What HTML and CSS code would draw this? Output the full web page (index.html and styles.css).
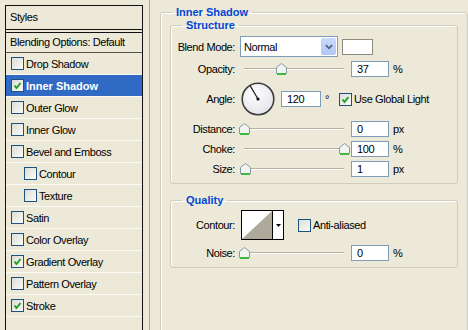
FILE: index.html
```html
<!DOCTYPE html>
<html lang="en">
<head>
  <meta charset="UTF-8" />
  <title>Layer Style - Inner Shadow</title>
  <link rel="stylesheet" href="styles.css">
</head>

<body>
  <div class="styles-panel">
    <div class="panel-title">Styles</div>
    <div class="blending">Blending Options: Default</div>
    <ul class="style-list">
      <li class="style-item"><span class="check"></span>Drop Shadow</li>
      <li class="style-item selected"><span class="check"><svg viewBox="0 0 11 11"><path d="M2.5 5.5 L4.5 8 L8.5 3" /></svg></span>Inner Shadow</li>
      <li class="style-item"><span class="check"></span>Outer Glow</li>
      <li class="style-item"><span class="check"></span>Inner Glow</li>
      <li class="style-item"><span class="check"></span>Bevel and Emboss</li>
      <li class="style-item sub"><span class="check"></span>Contour</li>
      <li class="style-item sub"><span class="check"></span>Texture</li>
      <li class="style-item"><span class="check"></span>Satin</li>
      <li class="style-item"><span class="check"></span>Color Overlay</li>
      <li class="style-item"><span class="check"><svg viewBox="0 0 11 11"><path d="M2.5 5.5 L4.5 8 L8.5 3" /></svg></span>Gradient Overlay</li>
      <li class="style-item"><span class="check"></span>Pattern Overlay</li>
      <li class="style-item"><span class="check"><svg viewBox="0 0 11 11"><path d="M2.5 5.5 L4.5 8 L8.5 3" /></svg></span>Stroke</li>
    </ul>
  </div>

  <div class="options">
    <fieldset class="group outer">
      <legend>Inner Shadow</legend>

      <fieldset class="group structure">
        <legend>Structure</legend>
        <div class="field-grid">
          <label>Blend Mode:</label>
          <div class="ctrl">
            <div class="select">
              <span class="select-value">Normal</span>
              <span class="select-btn"><svg viewBox="0 0 9 6"><path d="M1 1 L4.5 4.5 L8 1" /></svg></span>
            </div>
            <span class="swatch"></span>
          </div>

          <label>Opacity:</label>
          <div class="ctrl">
            <div class="slider"><div class="track"><span class="thumb" style="left: 37%"><svg viewBox="0 0 11 12"><path d="M0.5 10.5 V4.5 L5.5 0.5 L10.5 4.5 V10.5 Z" /><line x1="1" y1="11" x2="10" y2="11" /></svg></span></div></div>
            <span class="num">37</span>
            <span class="unit">%</span>
          </div>

          <label>Angle:</label>
          <div class="ctrl">
            <svg class="dial" viewBox="0 0 34 34">
              <defs>
                <radialGradient id="dialFill" cx="0.4" cy="0.35" r="0.7">
                  <stop offset="0" stop-color="#ffffff" />
                  <stop offset="1" stop-color="#e2e2ea" />
                </radialGradient>
              </defs>
              <circle cx="17" cy="17" r="15.8" fill="url(#dialFill)" stroke="#3d3d3d" stroke-width="1.6" />
              <line x1="17" y1="17" x2="9" y2="3.5" stroke="#111" stroke-width="1.2" />
              <circle cx="17" cy="17" r="1.6" fill="#111" />
            </svg>
            <span class="num angle">120</span>
            <span class="unit">&deg;</span>
            <span class="check global"><svg viewBox="0 0 11 11"><path d="M2.5 5.5 L4.5 8 L8.5 3" /></svg></span>
            <span class="check-label">Use Global Light</span>
          </div>

          <label>Distance:</label>
          <div class="ctrl">
            <div class="slider"><div class="track"><span class="thumb" style="left: 0%"><svg viewBox="0 0 11 12"><path d="M0.5 10.5 V4.5 L5.5 0.5 L10.5 4.5 V10.5 Z" /><line x1="1" y1="11" x2="10" y2="11" /></svg></span></div></div>
            <span class="num">0</span>
            <span class="unit">px</span>
          </div>

          <label>Choke:</label>
          <div class="ctrl">
            <div class="slider"><div class="track"><span class="thumb" style="left: 100%"><svg viewBox="0 0 11 12"><path d="M0.5 10.5 V4.5 L5.5 0.5 L10.5 4.5 V10.5 Z" /><line x1="1" y1="11" x2="10" y2="11" /></svg></span></div></div>
            <span class="num">100</span>
            <span class="unit">%</span>
          </div>

          <label>Size:</label>
          <div class="ctrl">
            <div class="slider"><div class="track"><span class="thumb" style="left: 1%"><svg viewBox="0 0 11 12"><path d="M0.5 10.5 V4.5 L5.5 0.5 L10.5 4.5 V10.5 Z" /><line x1="1" y1="11" x2="10" y2="11" /></svg></span></div></div>
            <span class="num">1</span>
            <span class="unit">px</span>
          </div>
        </div>
      </fieldset>

      <fieldset class="group quality">
        <legend>Quality</legend>
        <div class="field-grid quality-grid">
          <label>Contour:</label>
          <div class="ctrl">
            <div class="contour">
              <svg class="contour-curve" viewBox="0 0 30 28"><polygon points="0,28 30,0 30,28" /></svg>
              <span class="contour-btn"><svg viewBox="0 0 5 3"><polygon points="0,0 5,0 2.5,3" /></svg></span>
            </div>
            <span class="check anti"></span>
            <span class="check-label">Anti-aliased</span>
          </div>

          <label>Noise:</label>
          <div class="ctrl">
            <div class="slider"><div class="track"><span class="thumb" style="left: 0%"><svg viewBox="0 0 11 12"><path d="M0.5 10.5 V4.5 L5.5 0.5 L10.5 4.5 V10.5 Z" /><line x1="1" y1="11" x2="10" y2="11" /></svg></span></div></div>
            <span class="num">0</span>
            <span class="unit">%</span>
          </div>
        </div>
      </fieldset>
    </fieldset>
  </div>
</body>
</html>
```

FILE: styles.css
```css
html, body {
  overflow: hidden;
}
body {
  margin: 0;
  height: 330px;
  display: flex;
  align-items: flex-start;
  background: #ece9d8;
  font-family: "Liberation Sans", Arial, sans-serif;
  font-size: 11px;
  letter-spacing: -0.4px;
  color: #000;
}

/* left list of styles */
.styles-panel {
  margin: 5px 0 0 5px;
  width: 139px;
  height: 340px;
  box-sizing: border-box;
  border: 1px solid #111;
}
.panel-title {
  height: 23px;
  line-height: 23px;
  padding-left: 4px;
  border-bottom: 1px solid #111;
  margin-bottom: 2px;
}
.blending {
  height: 19px;
  line-height: 19px;
  padding-left: 4px;
  border-top: 1px solid #111;
  border-bottom: 1px solid #55534b;
}
.style-list {
  list-style: none;
  margin: 0;
  padding: 0;
}
.style-item {
  display: flex;
  align-items: center;
  height: 21px;
  padding-left: 5px;
  border-bottom: 1px solid #fbfaf5;
}
.style-item.sub {
  padding-left: 18px;
}
.style-item.selected {
  background: #316ac5;
  color: #fff;
  font-weight: bold;
  letter-spacing: 0;
}
.style-item .check {
  margin-right: 2px;
}

/* xp checkbox */
.check {
  display: inline-flex;
  width: 13px;
  height: 13px;
  box-sizing: border-box;
  border: 1px solid #1c5180;
  background: linear-gradient(135deg, #dcdcd7, #fbfbf9);
  flex: none;
}
.check svg {
  width: 11px;
  height: 11px;
}
.check path {
  fill: none;
  stroke: #21a121;
  stroke-width: 2;
}
.check-label {
  margin-left: 2px;
}

/* right side */
.options {
  margin-left: 6px;
  padding-left: 10px;
  border-left: 1px solid #aca899;
  height: 330px;
  flex: 1;
}
.group {
  margin: 0;
  border: 1px solid #cfcdbf;
  border-radius: 3px;
  box-shadow: inset 1px 1px #fff;
  min-width: 0;
}
.group legend {
  color: #0046d5;
  font-weight: bold;
  letter-spacing: 0;
  padding: 0 4px;
}
.outer {
  margin-top: 5px;
  width: 308px;
  height: 340px;
  box-sizing: border-box;
  padding: 0 9px;
}
.outer > legend {
  line-height: 14px;
  margin-left: 2px;
}
.structure {
  padding: 3px 0 5px 0;
}
.structure > legend {
  line-height: 13px;
  margin-left: 11px;
}
.quality {
  margin-top: 9px;
  padding: 3px 0 5px 0;
}
.quality > legend {
  line-height: 14px;
  margin-left: 11px;
}

.field-grid {
  display: grid;
  grid-template-columns: 64px 1fr;
  grid-template-rows: 23px 18px 38px 18px 18px 18px;
  column-gap: 4px;
  row-gap: 2px;
  align-items: center;
}
.quality-grid {
  grid-template-rows: 30px 18px;
  row-gap: 4px;
}
.field-grid label {
  text-align: right;
  white-space: nowrap;
}
.ctrl {
  display: flex;
  align-items: center;
  height: 100%;
}

/* blend mode combo */
.select {
  display: flex;
  align-items: center;
  margin-left: 1px;
  width: 98px;
  height: 21px;
  box-sizing: border-box;
  border: 1px solid #7f9db9;
  background: #fff;
}
.select-value {
  flex: 1;
  padding-left: 3px;
}
.select-btn {
  display: flex;
  align-items: center;
  justify-content: center;
  width: 15px;
  height: 17px;
  margin-right: 1px;
  border-radius: 2px;
  background: linear-gradient(#c9d9fc, #b2c7f4);
}
.select-btn svg {
  width: 8px;
  height: 6px;
}
.select-btn path {
  fill: none;
  stroke: #4d6185;
  stroke-width: 2;
}
.swatch {
  width: 31px;
  height: 16px;
  margin-left: 4px;
  box-sizing: border-box;
  border: 1px solid #8d8b80;
  background: #fff;
}

/* sliders */
.slider {
  position: relative;
  width: 110px;
  height: 18px;
}
.track {
  position: absolute;
  left: 5px;
  width: 100px;
  top: 8px;
  height: 2px;
  box-sizing: border-box;
  border-top: 1px solid #b5b2a3;
  border-bottom: 1px solid #fff;
}
.thumb {
  position: absolute;
  top: -6px;
  margin-left: -5px;
  width: 11px;
  height: 12px;
}
.thumb svg {
  display: block;
  width: 11px;
  height: 12px;
}
.thumb path {
  fill: #f3f3ef;
  stroke: #8497a7;
}
.thumb line {
  stroke: #3ebb3e;
  stroke-width: 2;
}
.num {
  width: 38px;
  height: 16px;
  line-height: 14px;
  margin-left: 2px;
  padding-left: 5px;
  box-sizing: border-box;
  border: 1px solid #7f9db9;
  background: #fff;
}
.num.angle {
  width: 40px;
  margin-left: 6px;
}
.unit {
  margin-left: 4px;
}

/* angle */
.dial {
  width: 34px;
  height: 34px;
  margin-left: 2px;
}
.check.global {
  margin-left: 10px;
}

/* contour picker */
.contour {
  display: flex;
  margin-left: 2px;
  height: 30px;
  box-sizing: border-box;
  border: 1px solid #000;
}
.contour-curve {
  width: 30px;
  height: 28px;
  background: #fff;
}
.contour-curve polygon {
  fill: #aeaa9b;
}
.contour-btn {
  display: flex;
  align-items: center;
  justify-content: center;
  width: 10px;
  border-left: 1px solid #000;
  background: #fff;
}
.contour-btn svg {
  width: 5px;
  height: 3px;
}
.check.anti {
  margin-left: 14px;
}
```
